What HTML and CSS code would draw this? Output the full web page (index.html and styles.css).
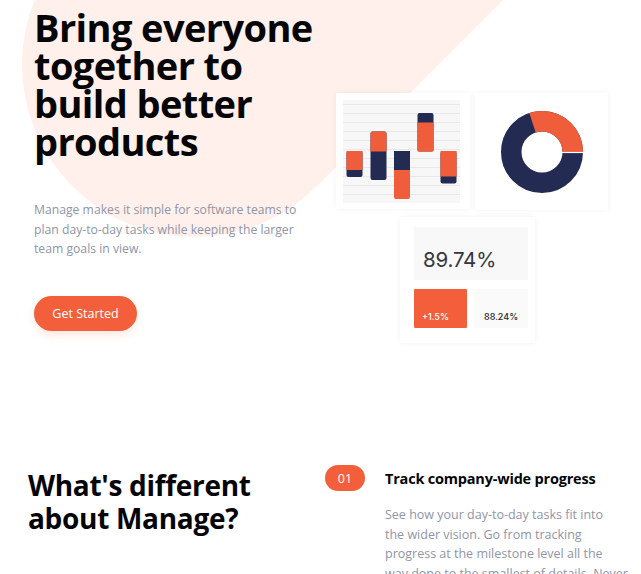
FILE: index.html
```html
<!DOCTYPE html>
<html lang="en">
<head>
<meta charset="utf-8">
<title>Manage</title>
<link rel="stylesheet" href="styles.css">
</head>
<body>
<div class="bg-shape" aria-hidden="true">
  <svg width="641" height="300" viewBox="0 0 641 300">
    <rect x="22" y="-108" width="900" height="345" rx="172.5" ry="172.5" fill="#fff0eb" transform="rotate(-45 194.5 64.5)"/>
  </svg>
</div>
<main class="page">
  <section class="hero">
    <div class="hero-text">
      <h1 class="hero-title">Bring everyone together to build better products</h1>
      <p class="hero-lead">Manage makes it simple for software teams to plan day-to-day tasks while keeping the larger team goals in view.</p>
      <a class="btn" href="#">Get Started</a>
    </div>
    <div class="illus">
      <div class="illus-row">
        <div class="card card-bars">
          <svg class="bars" width="117" height="103" viewBox="0 0 117 103">
            <rect x="0" y="0" width="117" height="103" fill="#f7f7f8"/>
            <g stroke="#e9e9ec" stroke-width="1">
              <line x1="0" y1="4.5" x2="117" y2="4.5"/>
              <line x1="0" y1="13.5" x2="117" y2="13.5"/>
              <line x1="0" y1="22.5" x2="117" y2="22.5"/>
              <line x1="0" y1="31.5" x2="117" y2="31.5"/>
              <line x1="0" y1="40.5" x2="117" y2="40.5"/>
              <line x1="0" y1="49.5" x2="117" y2="49.5"/>
              <line x1="0" y1="58.5" x2="117" y2="58.5"/>
              <line x1="0" y1="67.5" x2="117" y2="67.5"/>
              <line x1="0" y1="76.5" x2="117" y2="76.5"/>
              <line x1="0" y1="85.5" x2="117" y2="85.5"/>
              <line x1="0" y1="94.5" x2="117" y2="94.5"/>
            </g>
            <rect x="3.5" y="51" width="16" height="26" rx="2" fill="#242b52"/>
            <rect x="3.5" y="51" width="16" height="19" fill="#f05d3b"/>
            <rect x="27.5" y="31.5" width="16" height="48.5" rx="2" fill="#242b52"/>
            <path d="M27.5 33.5a2 2 0 0 1 2-2h12a2 2 0 0 1 2 2V51.5H27.5z" fill="#f05d3b"/>
            <rect x="51" y="51" width="16" height="48" rx="2" fill="#f05d3b"/>
            <rect x="51" y="51" width="16" height="19" fill="#242b52"/>
            <rect x="74.5" y="13" width="16" height="38.5" rx="2" fill="#242b52"/>
            <rect x="74.5" y="22.5" width="16" height="29" fill="#f05d3b"/>
            <rect x="97.5" y="51" width="16" height="32.5" rx="2" fill="#242b52"/>
            <rect x="97.5" y="51" width="16" height="25.5" fill="#f05d3b"/>
          </svg>
        </div>
        <div class="card card-donut">
          <svg width="84" height="84" viewBox="0 0 84 84">
            <circle cx="42" cy="42" r="30.75" fill="none" stroke="#242b52" stroke-width="20.5"/>
            <circle cx="42" cy="42" r="30.75" fill="none" stroke="#f05d3b" stroke-width="20.5" stroke-dasharray="58 200" transform="rotate(-108 42 42)"/>
            <line x1="62" y1="42.5" x2="84" y2="42.5" stroke="#ffffff" stroke-width="1.2"/>
          </svg>
        </div>
      </div>
      <div class="card card-stat">
        <div class="stat-main">89.74%</div>
        <div class="stat-row">
          <div class="stat-up">+1.5%</div>
          <div class="stat-prev">88.24%</div>
        </div>
      </div>
    </div>
  </section>

  <section class="diff">
    <h2 class="diff-title">What's different about Manage?</h2>
    <ol class="features">
      <li class="feature">
        <span class="feature-num">01</span>
        <div class="feature-body">
          <h3 class="feature-title">Track company-wide progress</h3>
          <p class="feature-text">See how your day-to-day tasks fit into<br>the wider vision. Go from tracking<br>progress at the milestone level all the<br>way done to the smallest of details. Never<br>lose sight of the bigger picture again.</p>
        </div>
      </li>
    </ol>
  </section>
</main>
</body>
</html>
```
FILE: styles.css
```css
* { box-sizing: border-box; }

html, body {
  margin: 0;
  padding: 0;
  background: #ffffff;
}

body {
  font-family: "Open Sans", "Noto Sans", sans-serif;
  color: #0b0b12;
  overflow: hidden;
  height: 574px;
  position: relative;
}

.bg-shape {
  position: absolute;
  left: 0;
  top: 0;
  z-index: 0;
  line-height: 0;
}

.page {
  position: relative;
  z-index: 1;
}

.hero {
  display: flex;
  padding-left: 34px;
}

.hero-text {
  width: 302px;
  flex: none;
}

.hero-title {
  margin: 8px 0 0;
  font-size: 38px;
  line-height: 38px;
  font-weight: 700;
  letter-spacing: -0.6px;
  color: #050508;
}

.hero-lead {
  margin: 40px 0 0;
  width: 270px;
  font-size: 12.2px;
  line-height: 19.5px;
  color: #9095a7;
}

.btn {
  display: inline-flex;
  align-items: center;
  justify-content: center;
  margin-top: 37px;
  width: 103px;
  height: 35px;
  border-radius: 18px;
  background: #f25f3a;
  color: #ffffff;
  font-size: 12.5px;
  text-decoration: none;
  box-shadow: 0 4px 8px rgba(242, 95, 58, 0.15);
}

.illus {
  padding-top: 93px;
  display: flex;
  flex-direction: column;
}

.illus-row {
  display: flex;
  gap: 5px;
}

.card {
  background: #ffffff;
  box-shadow: 0 0 6px rgba(40, 40, 60, 0.05);
}

.card-bars {
  width: 134px;
  height: 116px;
  padding: 7px;
}

.bars { display: block; }

.card-donut {
  width: 133px;
  height: 117px;
  display: flex;
  align-items: center;
  justify-content: center;
}

.card-donut svg { display: block; }

.card-stat {
  margin: 7px 0 0 64px;
  width: 135px;
  padding: 10px 7px 15px 14px;
  font-family: "Inter", "Roboto", sans-serif;
}

.stat-main {
  height: 53px;
  background: #f8f8f9;
  padding: 21px 0 0 9px;
  font-size: 20.5px;
  line-height: 24px;
  color: #35373e;
  letter-spacing: -0.2px;
}

.stat-row {
  display: flex;
  gap: 7px;
  margin-top: 9px;
}

.stat-up,
.stat-prev {
  height: 39px;
  padding: 22px 0 0 8px;
  font-size: 9px;
  line-height: 11px;
  font-weight: 500;
}

.stat-up {
  width: 53px;
  background: #f25f3a;
  color: #ffffff;
  border-radius: 1px;
}

.stat-prev {
  width: 54px;
  background: #fafafa;
  color: #26272d;
  padding-left: 10px;
}

.diff {
  display: flex;
  margin-top: 122px;
  padding-left: 28px;
}

.diff-title {
  width: 297px;
  flex: none;
  margin: 4px 0 0;
  font-size: 28px;
  line-height: 33px;
  font-weight: 700;
  letter-spacing: -0.3px;
  color: #050508;
}

.features {
  list-style: none;
  margin: 0;
  padding: 0;
}

.feature {
  display: flex;
  gap: 20px;
  align-items: flex-start;
}

.feature-num {
  flex: none;
  width: 40px;
  height: 26px;
  border-radius: 13px;
  background: #f25f3a;
  color: #ffffff;
  font-size: 12.5px;
  display: flex;
  align-items: center;
  justify-content: center;
}

.feature-body {
  width: 256px;
}

.feature-title {
  margin: 4px 0 0;
  font-size: 14.5px;
  line-height: 20px;
  font-weight: 700;
  letter-spacing: -0.2px;
  color: #050508;
}

.feature-text {
  margin: 16px 0 0;
  font-size: 12.5px;
  line-height: 19.7px;
  color: #9095a7;
  white-space: nowrap;
}
```
